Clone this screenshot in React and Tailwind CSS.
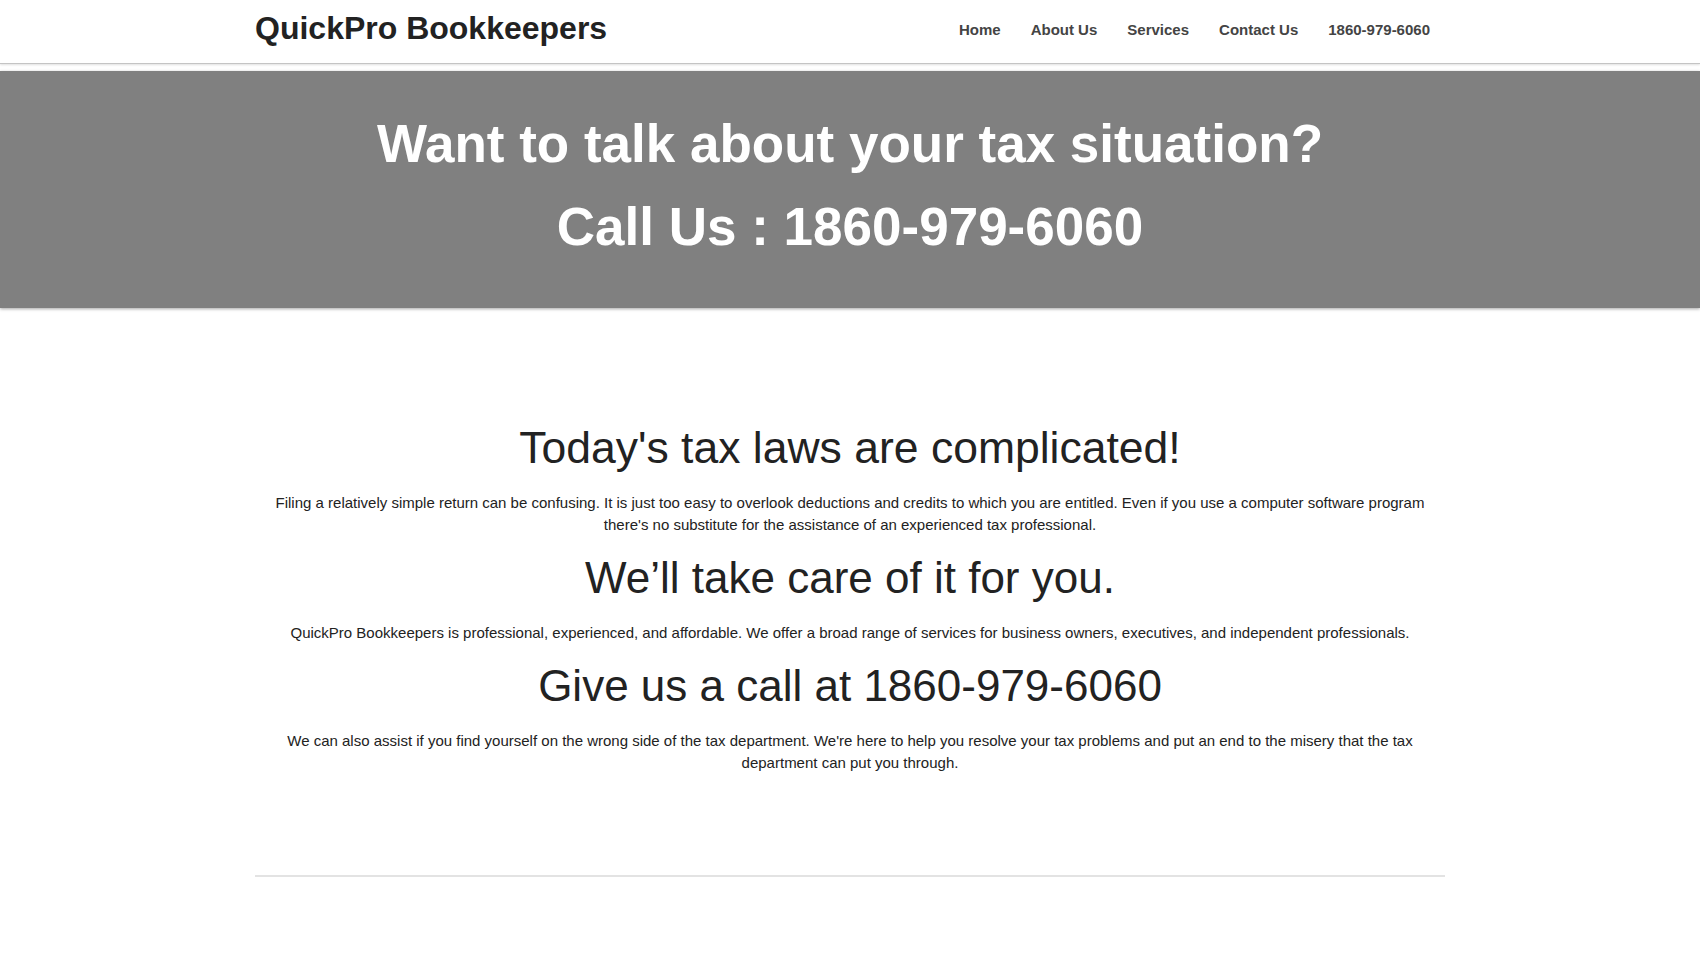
export default function App() {
  const nav = ["Home", "About Us", "Services", "Contact Us", "1860-979-6060"];
  return (
    <div className="min-h-[960px] bg-white font-['Liberation_Sans',Arial,sans-serif]">
      <header className="h-[64px] border-b border-[#c4c4c4] shadow-[0_1px_2px_rgba(0,0,0,0.12)] bg-white">
        <div className="mx-auto w-[1190px] flex justify-between items-start">
          <div className="pt-[10px] text-[32px] leading-[36px] font-bold text-[#222]">QuickPro Bookkeepers</div>
          <nav className="pt-[20px] flex">
            {nav.map((n) => (
              <a key={n} className="px-[15px] text-[15px] leading-[20px] font-bold text-[#444]">{n}</a>
            ))}
          </nav>
        </div>
      </header>
      <section className="mt-[7px] bg-[#808080] pt-[43px] pb-[51px] text-center text-white font-bold shadow-[0_1px_3px_rgba(0,0,0,0.35)]">
        <h1 className="text-[53px] leading-[60px]">Want to talk about your tax situation?</h1>
        <h1 className="mt-[23px] text-[53px] leading-[60px]">Call Us : 1860-979-6060</h1>
      </section>
      <main className="mx-auto w-[1190px] pt-[115px] text-center text-[#222] flex flex-col">
        <h2 className="text-[44.5px] leading-[50px]">Today's tax laws are complicated!</h2>
        <p className="mt-[19px] text-[15px] leading-[22px]">Filing a relatively simple return can be confusing. It is just too easy to overlook deductions and credits to which you are entitled. Even if you use a computer software program there's no substitute for the assistance of an experienced tax professional.</p>
        <h2 className="mt-[17px] text-[44px] leading-[50px]">We’ll take care of it for you.</h2>
        <p className="mt-[19px] text-[15px] leading-[22px]">QuickPro Bookkeepers is professional, experienced, and affordable. We offer a broad range of services for business owners, executives, and independent professionals.</p>
        <h2 className="mt-[17px] text-[44px] leading-[50px]">Give us a call at 1860-979-6060</h2>
        <p className="mt-[19px] text-[15px] leading-[22px]">We can also assist if you find yourself on the wrong side of the tax department. We're here to help you resolve your tax problems and put an end to the misery that the tax department can put you through.</p>
      </main>
      <div className="mx-auto w-[1190px] mt-[101px] border-t-2 border-[#e3e3e3]"></div>
    </div>
  );
}
